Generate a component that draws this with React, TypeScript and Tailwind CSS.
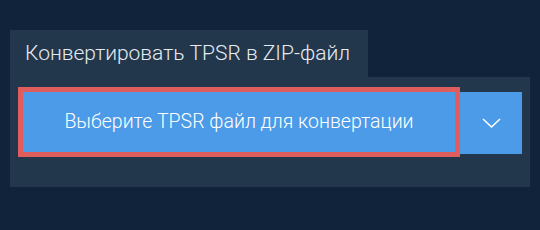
export default function App() {
  return (
    <div
      className="w-[540px] h-[230px] bg-[#10233a] pt-[30px] px-[10px]"
      style={{ fontFamily: "Roboto, 'Noto Sans', sans-serif" }}
    >
      {/* Tab */}
      <div className="w-[358px] h-[47px] bg-[#22364c] flex items-center pl-[15px] pb-[1px] text-[21px] font-light text-[#e6ebf1] leading-none">
        Конвертировать TPSR в ZIP-файл
      </div>

      {/* Panel */}
      <div className="w-[520px] h-[110px] bg-[#22364c] pt-[10px] px-[8px]">
        <div className="flex items-start">
          <button className="w-[442px] h-[70px] border-[5px] border-[#e05d5d] bg-[#4c9be8] text-white text-[19.5px] font-light flex items-center justify-center">
            Выберите TPSR файл для конвертации
          </button>
          <button className="mt-[5px] w-[62px] h-[62px] bg-[#4c9be8] flex items-center justify-center">
            <svg width="19" height="10" viewBox="0 0 19 10" fill="none">
              <path d="M1 1l8.5 8 8.5-8" stroke="white" strokeWidth="1.5" />
            </svg>
          </button>
        </div>
      </div>
    </div>
  );
}
